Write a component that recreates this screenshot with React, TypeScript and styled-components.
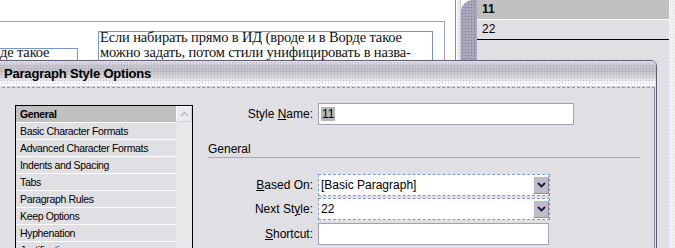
import styled, { createGlobalStyle } from "styled-components";

const GlobalStyle = createGlobalStyle`
  html, body { margin: 0; padding: 0; background: #fff; }
  body { font-family: "Liberation Sans", Arial, sans-serif; color: #000; }
  * { box-sizing: border-box; }
`;

const Screen = styled.div`
  position: relative;
  width: 675px;
  height: 248px;
  overflow: hidden;
  display: flex;
  background: #fff;
`;

/* document area behind the dialog */
const Pasteboard = styled.div`
  width: 456px;
  flex: none;
  padding-top: 21px;
  background: #fff;
  border-right: 1px solid #8d889c;
`;

const Spread = styled.div`
  width: 445px;
  height: 100%;
  display: flex;
  align-items: flex-start;
  border-top: 1px solid #a29eb2;
  border-right: 1px solid #a29eb2;
`;

const TextFrame = styled.div<{ $left: number; $top: number; $width: number }>`
  flex: none;
  margin-left: ${(p) => p.$left}px;
  margin-top: ${(p) => p.$top}px;
  width: ${(p) => p.$width}px;
  height: 60px;
  border: 1px solid #7896cf;
  font-family: "Liberation Serif", "Times New Roman", serif;
  font-size: 14.5px;
  letter-spacing: -0.15px;
  line-height: 15px;
  color: #111;
  white-space: nowrap;
`;

const FrameText = styled.div<{ $shift: number }>`
  margin-top: ${(p) => p.$shift}px;
  padding-left: 1px;
`;

const DockEdge = styled.div`
  width: 5px;
  flex: none;
  background: #ecebf0;
  border-left: 1px solid #fff;
  border-right: 1px solid #c9c6d3;
`;

const DockGrip = styled.div`
  width: 16px;
  flex: none;
  background-color: #aaa5bb;
  background-image: radial-gradient(#7d778f 0.7px, transparent 0.9px);
  background-size: 3px 3px;
  border-top-left-radius: 12px;
`;

const Panel = styled.div`
  width: 192px;
  flex: none;
  background: #e0dfe3;
`;

const PanelRow = styled.div<{ $active?: boolean }>`
  height: 20px;
  line-height: 19px;
  padding-left: 5px;
  font-size: 12px;
  font-weight: ${(p) => (p.$active ? 700 : 400)};
  background: ${(p) => (p.$active ? "#c0c0c0" : "#e0dfe3")};
  border-bottom: 1px solid ${(p) => (p.$active ? "#fff" : "#000")};
`;

const EdgeStrip = styled.div`
  width: 6px;
  flex: none;
  background-color: #f3f3f5;
  background-image: radial-gradient(#d8d8de 0.6px, transparent 0.8px);
  background-size: 3px 3px;
`;

/* dialog window */
const Dialog = styled.div`
  position: absolute;
  left: -4px;
  top: 60px;
  width: 661px;
  height: 200px;
  border: 1px solid #625d76;
  border-top-right-radius: 6px;
  background: #e0dfe3;
  overflow: hidden;
`;

const TitleBar = styled.div`
  height: 26px;
  line-height: 25px;
  padding-left: 7px;
  font-size: 13px;
  font-weight: 700;
  letter-spacing: -0.2px;
  color: #000;
  background-color: #d2d1d7;
  background-image: radial-gradient(rgba(120, 112, 150, 0.35) 0.6px, transparent 0.8px),
    linear-gradient(
      #e6e5ea 0%,
      #c6c4cd 18%,
      #c0bfc6 40%,
      #d6d5da 62%,
      #e9e9ec 78%,
      #fafafb 90%,
      #ffffff 100%
    );
  background-size: 3px 3px, 100% 100%;
  border-bottom: 1px solid #d4d3da;
`;

const Body = styled.div`
  display: flex;
  align-items: flex-start;
  height: 100%;
  padding: 15px 0 0 18px;
  border-top: 1px dashed #7d9ad0;
  border-right: 1px solid #8d889c;
  margin-right: 1px;
`;

const ListBox = styled.div`
  width: 178px;
  height: 160px;
  margin-top: 2px;
  flex: none;
  display: flex;
  border: 1px solid #000;
`;

const ListItems = styled.div`
  flex: 1;
`;

const ListItem = styled.div<{ $selected?: boolean }>`
  height: 17px;
  line-height: 16px;
  padding-left: 4px;
  font-size: 10.5px;
  letter-spacing: -0.35px;
  font-weight: ${(p) => (p.$selected ? 700 : 400)};
  background: ${(p) => (p.$selected ? "#c0c0c0" : "#e0dfe3")};
  border-bottom: 1px solid #fff;
  white-space: nowrap;
  overflow: hidden;
`;

const ScrollBar = styled.div`
  width: 16px;
  flex: none;
  background-color: #f4f4f6;
  background-image: radial-gradient(#dcdce2 0.6px, transparent 0.8px);
  background-size: 2px 2px;
`;

const ScrollButton = styled.div`
  height: 16px;
  display: flex;
  align-items: center;
  justify-content: center;
  background: #ebebef;
  border: 1px solid #fafafa;
  border-right-color: #d0d0d6;
  border-bottom-color: #d0d0d6;
`;

const Form = styled.div`
  margin-left: 15px;
  width: 432px;
  flex: none;
`;

const FieldRow = styled.div<{ $gap?: number }>`
  display: flex;
  align-items: center;
  gap: 5px;
  margin-top: ${(p) => p.$gap ?? 0}px;
`;

const Label = styled.div`
  width: 105px;
  text-align: right;
  font-size: 12px;
  white-space: nowrap;
`;

const TextBox = styled.div<{ $width: number }>`
  width: ${(p) => p.$width}px;
  height: 22px;
  padding-left: 2px;
  display: flex;
  align-items: center;
  font-size: 12px;
  background: #fff;
  border: 1px solid #a59fb8;
`;

const Highlight = styled.span`
  background: #b6b6b9;
  padding: 0 1px;
  line-height: 14px;
`;

const Select = styled.div`
  width: 232px;
  height: 22px;
  display: flex;
  align-items: center;
  background: #fff;
  border: 1px dashed #7c99cf;
  font-size: 12px;
`;

const SelectValue = styled.div`
  flex: 1;
  padding-left: 2px;
  white-space: nowrap;
`;

const DropButton = styled.div`
  width: 16px;
  height: 18px;
  display: flex;
  align-items: center;
  justify-content: center;
  background-color: #c9c8cf;
  background-image: radial-gradient(#b2b1b9 0.6px, transparent 0.8px);
  background-size: 2px 2px;
  border: 1px solid #f4f4f6;
  border-right-color: #8e8aa0;
  border-bottom-color: #8e8aa0;
`;

const SectionHeading = styled.div`
  margin-top: 17px;
  height: 16px;
  line-height: 15px;
  font-size: 12px;
  border-bottom: 1px solid #aaa5bd;
`;

const ChevronDown = () => (
  <svg width="9" height="6" viewBox="0 0 9 6">
    <path d="M1 1 L4.5 4.5 L8 1" fill="none" stroke="#14143a" strokeWidth="1.8" />
  </svg>
);

const ChevronUp = () => (
  <svg width="9" height="6" viewBox="0 0 9 6">
    <path d="M1 5 L4.5 1.5 L8 5" fill="none" stroke="#b9b9c3" strokeWidth="1.4" />
  </svg>
);

const sections = [
  "General",
  "Basic Character Formats",
  "Advanced Character Formats",
  "Indents and Spacing",
  "Tabs",
  "Paragraph Rules",
  "Keep Options",
  "Hyphenation",
  "Justification",
];

export default function App() {
  return (
    <>
      <GlobalStyle />
      <Screen>
        <Pasteboard>
          <Spread>
            <TextFrame $left={-2} $top={26} $width={80}>
              <FrameText $shift={-4}>де такое</FrameText>
            </TextFrame>
            <TextFrame $left={20} $top={9} $width={335}>
              <FrameText $shift={-2}>
                Если набирать прямо в ИД (вроде и в Ворде такое
                <br />
                можно задать, потом стили унифицировать в назва-
              </FrameText>
            </TextFrame>
          </Spread>
        </Pasteboard>
        <DockEdge />
        <DockGrip />
        <Panel>
          <PanelRow $active>11</PanelRow>
          <PanelRow>22</PanelRow>
        </Panel>
        <EdgeStrip />

        <Dialog>
          <TitleBar>Paragraph Style Options</TitleBar>
          <Body>
            <ListBox>
              <ListItems>
                {sections.map((s, i) => (
                  <ListItem key={s} $selected={i === 0}>
                    {s}
                  </ListItem>
                ))}
              </ListItems>
              <ScrollBar>
                <ScrollButton>
                  <ChevronUp />
                </ScrollButton>
              </ScrollBar>
            </ListBox>

            <Form>
              <FieldRow>
                <Label>
                  Style <u>N</u>ame:
                </Label>
                <TextBox $width={256}>
                  <Highlight>11</Highlight>
                </TextBox>
              </FieldRow>

              <SectionHeading>General</SectionHeading>

              <FieldRow $gap={16}>
                <Label>
                  <u>B</u>ased On:
                </Label>
                <Select>
                  <SelectValue>[Basic Paragraph]</SelectValue>
                  <DropButton>
                    <ChevronDown />
                  </DropButton>
                </Select>
              </FieldRow>
              <FieldRow $gap={2}>
                <Label>
                  Next St<u>y</u>le:
                </Label>
                <Select>
                  <SelectValue>22</SelectValue>
                  <DropButton>
                    <ChevronDown />
                  </DropButton>
                </Select>
              </FieldRow>
              <FieldRow $gap={3}>
                <Label>
                  <u>S</u>hortcut:
                </Label>
                <TextBox $width={231} />
              </FieldRow>
            </Form>
          </Body>
        </Dialog>
      </Screen>
    </>
  );
}
